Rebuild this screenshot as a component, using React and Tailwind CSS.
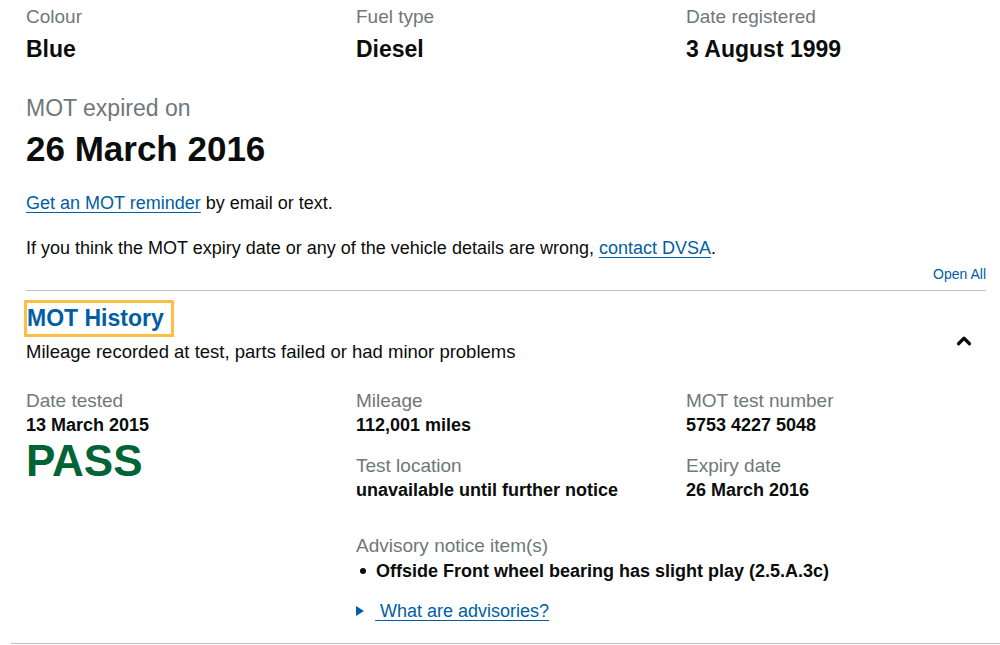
import { ChevronUp } from 'lucide-react'

const FONT = { fontFamily: '"Liberation Sans", Arial, sans-serif' }

function Field({ label, value }) {
  return (
    <div>
      <div className="text-[19px] leading-[24px] text-[#6f777b]">{label}</div>
      <div className="text-[23px] leading-[36px] font-bold mt-[2px]">{value}</div>
    </div>
  )
}

function Item({ label, value, className = '' }) {
  return (
    <div className={className}>
      <div className="text-[19px] leading-[24px] text-[#6f777b]">{label}</div>
      <div className="text-[18px] leading-[24px] font-bold">{value}</div>
    </div>
  )
}

export default function App() {
  return (
    <div className="bg-white text-[#0b0c0c] w-[1000px] h-[645px] overflow-hidden" style={FONT}>
      <div className="w-[990px] ml-[11px]">
        {/* vehicle summary */}
        <div className="grid grid-cols-3 pt-[5px]">
          <div className="px-[15px]"><Field label="Colour" value="Blue" /></div>
          <div className="px-[15px]"><Field label="Fuel type" value="Diesel" /></div>
          <div className="px-[15px]"><Field label="Date registered" value="3 August 1999" /></div>
        </div>

        <div className="px-[15px] mt-[26px]">
          <div className="text-[23px] leading-[30px] text-[#6f777b]">MOT expired on</div>
          <div className="text-[35px] leading-[44px] font-bold mt-[4px]">26 March 2016</div>

          <p className="text-[18px] leading-[24px] mt-[20px]">
            <a href="#" className="text-[#005ea5] underline underline-offset-[3px]">Get an MOT reminder</a> by email or text.
          </p>
          <p className="text-[18px] leading-[24px] mt-[21px]">
            If you think the MOT expiry date or any of the vehicle details are wrong,{' '}
            <a href="#" className="text-[#005ea5] underline underline-offset-[3px]">contact DVSA</a>.
          </p>

          <div className="flex justify-end mt-[5px]">
            <a href="#" className="text-[14px] leading-[18px] text-[#005ea5]">Open All</a>
          </div>
          <div className="border-t border-[#bfc1c3] mt-[7px]" />

          {/* accordion header */}
          <div className="flex items-start justify-between mt-[9px]">
            <div>
              <h2 className="inline-block border-[3px] border-[#ffbf47] pl-0 pr-[7px] -ml-[2px] text-[23px] leading-[31px] font-bold text-[#005ea5]">
                MOT History
              </h2>
              <div className="text-[18.5px] leading-[22px] mt-[4px]">Mileage recorded at test, parts failed or had minor problems</div>
            </div>
            <ChevronUp size={22} strokeWidth={3.5} className="mr-[11px] mt-[30px]" />
          </div>
        </div>

        {/* test result */}
        <div className="grid grid-cols-3 mt-[26px]">
          <div className="px-[15px]">
            <div className="text-[19px] leading-[24px] text-[#6f777b]">Date tested</div>
            <div className="text-[18px] leading-[24px] font-bold">13 March 2015</div>
            <div className="text-[44px] leading-[48px] font-bold text-[#006435]">PASS</div>
          </div>
          <div className="col-span-2">
            <div className="grid grid-cols-2">
              <div className="px-[15px]">
                <Item label="Mileage" value="112,001 miles" />
                <Item label="Test location" value="unavailable until further notice" className="mt-[17px]" />
              </div>
              <div className="px-[15px]">
                <Item label="MOT test number" value="5753 4227 5048" />
                <Item label="Expiry date" value="26 March 2016" className="mt-[17px]" />
              </div>
            </div>
            <div className="px-[15px] mt-[32px]">
              <div className="text-[19px] leading-[24px] text-[#6f777b]">Advisory notice item(s)</div>
              <div className="flex items-center text-[18px] leading-[26px] font-bold">
                <span className="w-[6px] h-[6px] rounded-full bg-[#0b0c0c] ml-[4px] mr-[10px]" />
                Offside Front wheel bearing has slight play (2.5.A.3c)
              </div>
              <div className="flex items-center mt-[15px]">
                <svg width="8" height="10" viewBox="0 0 8 10" className="mr-[11px]">
                  <polygon points="0,0 8,5 0,10" fill="#005ea5" />
                </svg>
                <a href="#" className="text-[18px] leading-[24px] text-[#005ea5] underline underline-offset-[3px]">&nbsp;What are advisories?</a>
              </div>
            </div>
          </div>
        </div>
        <div className="border-t border-[#bfc1c3] mt-[20px]" />
      </div>
    </div>
  )
}
